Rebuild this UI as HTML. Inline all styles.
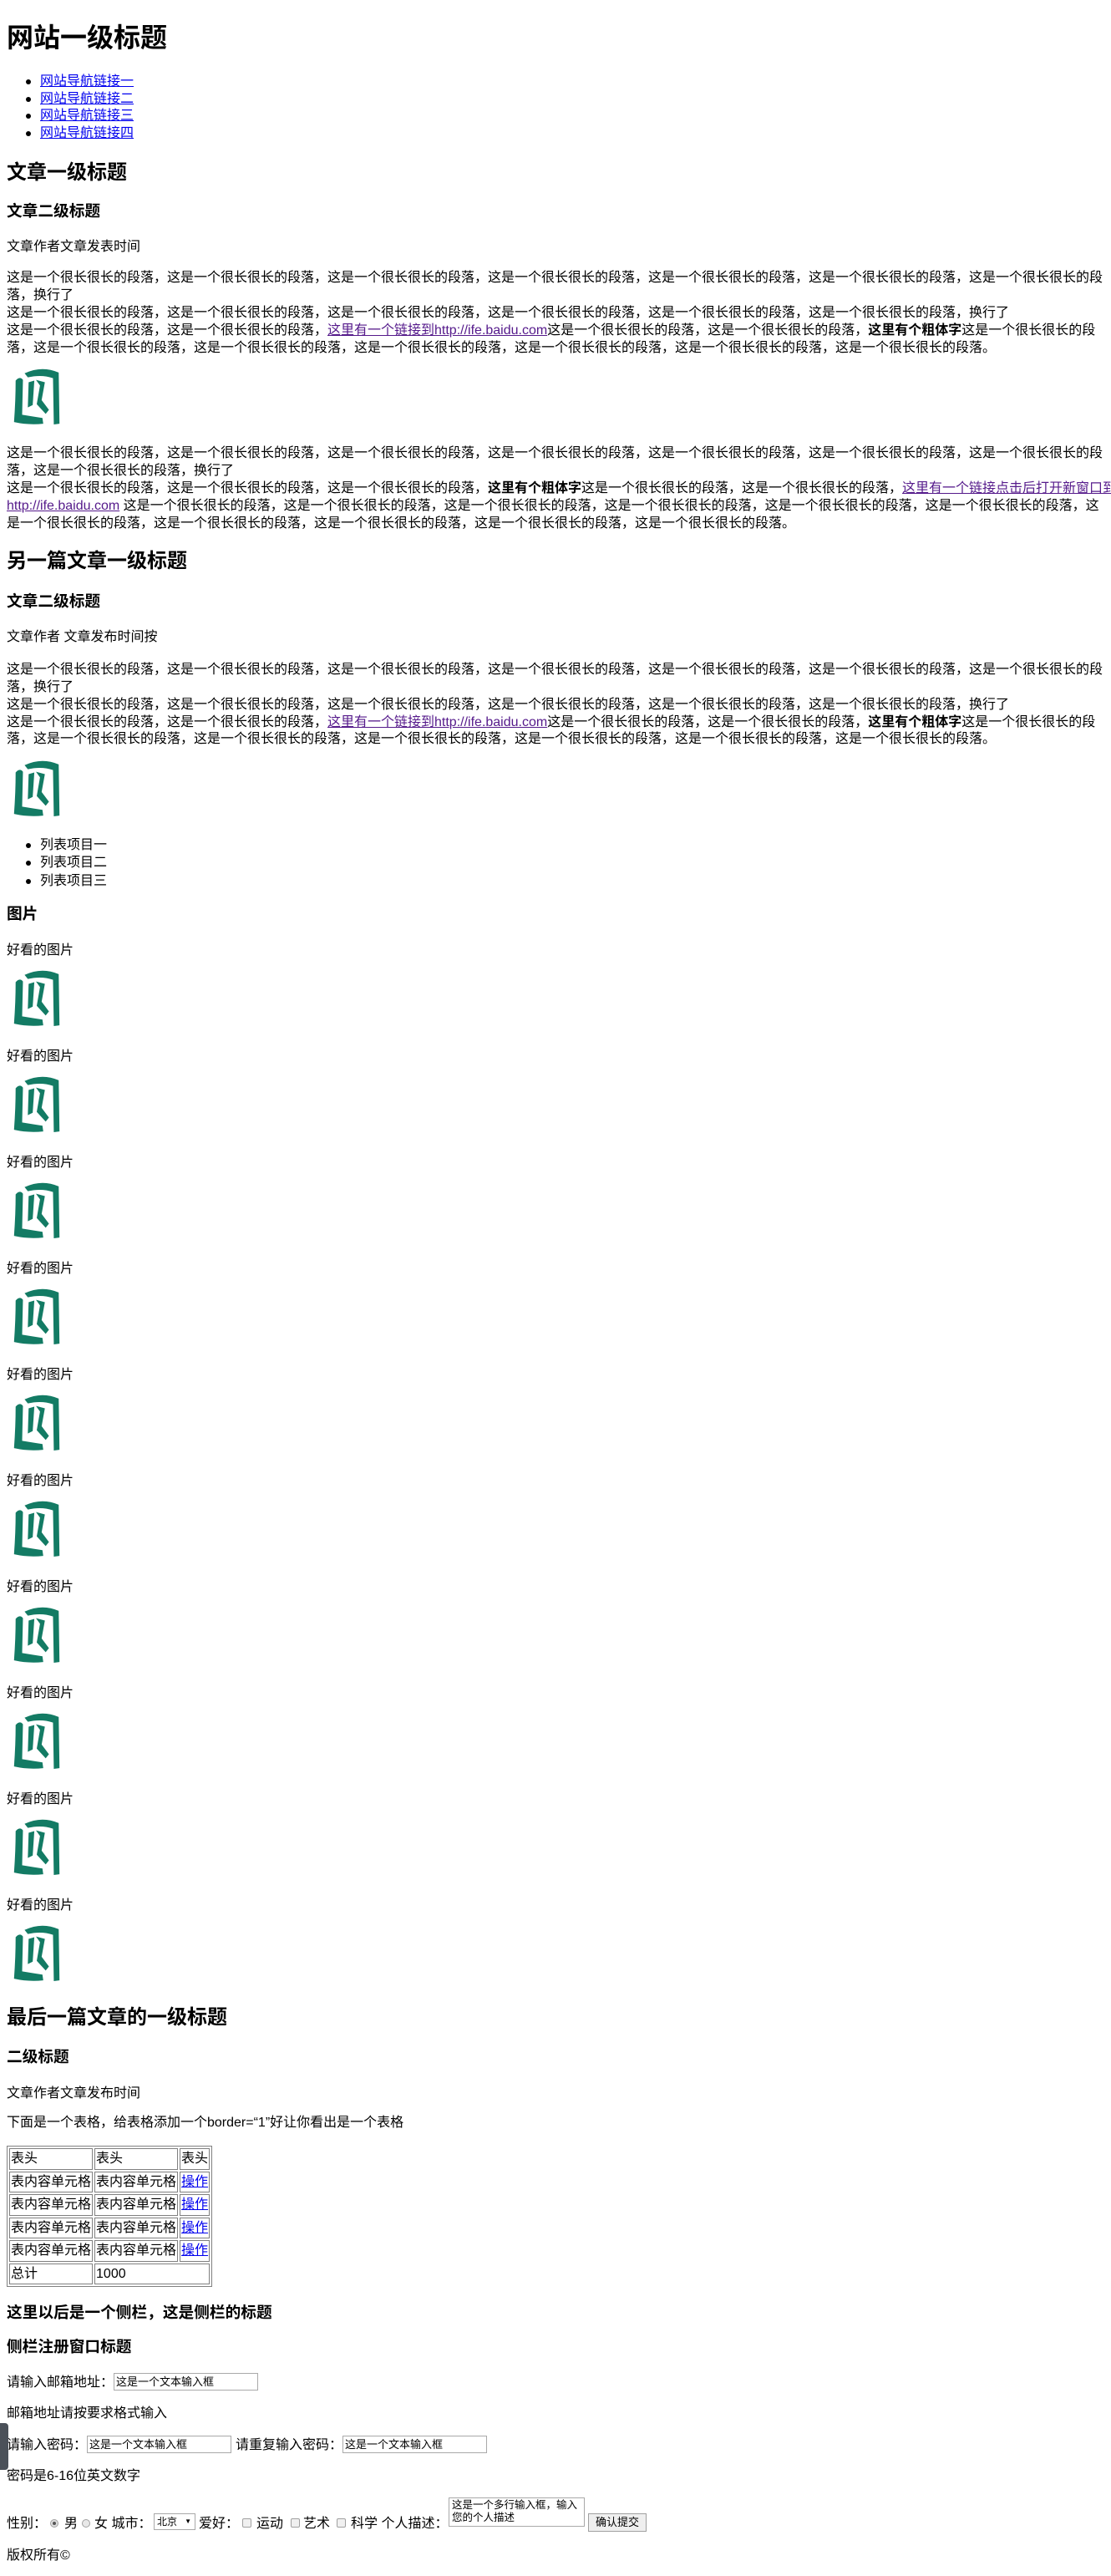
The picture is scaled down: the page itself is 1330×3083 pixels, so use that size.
<!DOCTYPE html>
<html><head><meta charset="utf-8">
<style>
html,body{margin:0;padding:0;background:#fff;}
body{width:1330px;height:3083px;position:relative;overflow:hidden;font-family:"Liberation Sans","Noto Sans CJK SC",sans-serif;color:#000;font-size:16px;}
.a{position:absolute;left:8px;white-space:nowrap;line-height:21px;height:21px;}
.h1{font-size:32px;font-weight:bold;line-height:42px;height:42px;}
.h2{font-size:24px;font-weight:bold;line-height:32px;height:32px;}
.h3{font-size:18.7px;font-weight:bold;line-height:26px;height:26px;}
a{color:#0000ee;}
a.v{color:#551a8b;}
.li{left:48px;}
.li:before{content:"";position:absolute;left:-17px;top:8px;width:6px;height:6px;border-radius:50%;background:#000;}
.img{position:absolute;left:14px;width:60px;height:70px;}
table{border-collapse:separate;border-spacing:2px;border:1px solid #808080;position:absolute;left:8px;top:2568px;font-size:16px;}
td{border:1px solid #808080;padding:1px;line-height:21.5px;white-space:nowrap;}
.inp{position:absolute;height:19px;border:1px solid #a9a9a9;font-size:13px;line-height:19px;padding-left:2px;box-sizing:border-box;height:21px;}
.rad{position:absolute;width:10px;height:10px;border-radius:50%;border:1px solid #a0a0a0;background:#e8e8e8;box-sizing:border-box;}
.chk{position:absolute;width:11px;height:11px;border:1px solid #a0a0a0;background:#f0f0f0;border-radius:2px;box-sizing:border-box;}
</style></head><body>
<svg width="0" height="0" style="position:absolute"><defs><g id="ic" fill="#137b64">
<path d="M4 16 Q9 10 13 15 L12 58 Q24 60 37 62 L38 69 Q20 71 2 67 Q4 40 4 16 Z"/>
<path d="M15 7 Q36 -3 57 6 L58 69 L51 70 L50 13 Q36 8 19 12 Z"/>
<path d="M20 18 L27 16 L25 46 L19 49 Z"/>
<path d="M29 15 L40 18 L36 40 L45 52 L41 57 L30 45 L34 22 Z"/>
</g></defs></svg>

<div class="a h1" style="top:24px">网站一级标题</div>
<div class="a li" style="top:87px"><a href="#">网站导航链接一</a></div>
<div class="a li" style="top:108px"><a href="#">网站导航链接二</a></div>
<div class="a li" style="top:128px"><a href="#">网站导航链接三</a></div>
<div class="a li" style="top:149px"><a href="#">网站导航链接四</a></div>

<div class="a h2" style="top:191px">文章一级标题</div>
<div class="a h3" style="top:240px">文章二级标题</div>
<div class="a" style="top:285px">文章作者文章发表时间</div>
<div class="a" style="top:322px">这是一个很长很长的段落，这是一个很长很长的段落，这是一个很长很长的段落，这是一个很长很长的段落，这是一个很长很长的段落，这是一个很长很长的段落，这是一个很长很长的段</div>
<div class="a" style="top:343px">落，换行了</div>
<div class="a" style="top:364px">这是一个很长很长的段落，这是一个很长很长的段落，这是一个很长很长的段落，这是一个很长很长的段落，这是一个很长很长的段落，这是一个很长很长的段落，换行了</div>
<div class="a" style="top:385px">这是一个很长很长的段落，这是一个很长很长的段落，<a class="v" href="#">这里有一个链接到http://ife.baidu.com</a>这是一个很长很长的段落，这是一个很长很长的段落，<b>这里有个粗体字</b>这是一个很长很长的段</div>
<div class="a" style="top:406px">落，这是一个很长很长的段落，这是一个很长很长的段落，这是一个很长很长的段落，这是一个很长很长的段落，这是一个很长很长的段落，这是一个很长很长的段落。</div>
<svg class="img" style="top:440px" viewBox="0 0 60 72"><use href="#ic"/></svg>
<div class="a" style="top:532px">这是一个很长很长的段落，这是一个很长很长的段落，这是一个很长很长的段落，这是一个很长很长的段落，这是一个很长很长的段落，这是一个很长很长的段落，这是一个很长很长的段</div>
<div class="a" style="top:553px">落，这是一个很长很长的段落，换行了</div>
<div class="a" style="top:574px">这是一个很长很长的段落，这是一个很长很长的段落，这是一个很长很长的段落，<b>这里有个粗体字</b>这是一个很长很长的段落，这是一个很长很长的段落，<a class="v" href="#">这里有一个链接点击后打开新窗口到</a></div>
<div class="a" style="top:595px"><a class="v" href="#">http://ife.baidu.com</a> 这是一个很长很长的段落，这是一个很长很长的段落，这是一个很长很长的段落，这是一个很长很长的段落，这是一个很长很长的段落，这是一个很长很长的段落，这</div>
<div class="a" style="top:616px">是一个很长很长的段落，这是一个很长很长的段落，这是一个很长很长的段落，这是一个很长很长的段落，这是一个很长很长的段落。</div>

<div class="a h2" style="top:656px">另一篇文章一级标题</div>
<div class="a h3" style="top:707px">文章二级标题</div>
<div class="a" style="top:752px">文章作者 文章发布时间按</div>
<div class="a" style="top:791px">这是一个很长很长的段落，这是一个很长很长的段落，这是一个很长很长的段落，这是一个很长很长的段落，这是一个很长很长的段落，这是一个很长很长的段落，这是一个很长很长的段</div>
<div class="a" style="top:812px">落，换行了</div>
<div class="a" style="top:833px">这是一个很长很长的段落，这是一个很长很长的段落，这是一个很长很长的段落，这是一个很长很长的段落，这是一个很长很长的段落，这是一个很长很长的段落，换行了</div>
<div class="a" style="top:854px">这是一个很长很长的段落，这是一个很长很长的段落，<a class="v" href="#">这里有一个链接到http://ife.baidu.com</a>这是一个很长很长的段落，这是一个很长很长的段落，<b>这里有个粗体字</b>这是一个很长很长的段</div>
<div class="a" style="top:874px">落，这是一个很长很长的段落，这是一个很长很长的段落，这是一个很长很长的段落，这是一个很长很长的段落，这是一个很长很长的段落，这是一个很长很长的段落。</div>
<svg class="img" style="top:909px" viewBox="0 0 60 72"><use href="#ic"/></svg>
<div class="a li" style="top:1001px">列表项目一</div>
<div class="a li" style="top:1022px">列表项目二</div>
<div class="a li" style="top:1044px">列表项目三</div>
<div class="a h3" style="top:1081px">图片</div>

<div class="a" style="top:1127px">好看的图片</div><svg class="img" style="top:1160px" viewBox="0 0 60 72"><use href="#ic"/></svg>
<div class="a" style="top:1254px">好看的图片</div><svg class="img" style="top:1287px" viewBox="0 0 60 72"><use href="#ic"/></svg>
<div class="a" style="top:1381px">好看的图片</div><svg class="img" style="top:1414px" viewBox="0 0 60 72"><use href="#ic"/></svg>
<div class="a" style="top:1508px">好看的图片</div><svg class="img" style="top:1541px" viewBox="0 0 60 72"><use href="#ic"/></svg>
<div class="a" style="top:1635px">好看的图片</div><svg class="img" style="top:1668px" viewBox="0 0 60 72"><use href="#ic"/></svg>
<div class="a" style="top:1762px">好看的图片</div><svg class="img" style="top:1795px" viewBox="0 0 60 72"><use href="#ic"/></svg>
<div class="a" style="top:1889px">好看的图片</div><svg class="img" style="top:1922px" viewBox="0 0 60 72"><use href="#ic"/></svg>
<div class="a" style="top:2016px">好看的图片</div><svg class="img" style="top:2049px" viewBox="0 0 60 72"><use href="#ic"/></svg>
<div class="a" style="top:2143px">好看的图片</div><svg class="img" style="top:2176px" viewBox="0 0 60 72"><use href="#ic"/></svg>
<div class="a" style="top:2270px">好看的图片</div><svg class="img" style="top:2303px" viewBox="0 0 60 72"><use href="#ic"/></svg>

<div class="a h2" style="top:2399px">最后一篇文章的一级标题</div>
<div class="a h3" style="top:2449px">二级标题</div>
<div class="a" style="top:2495px">文章作者文章发布时间</div>
<div class="a" style="top:2530px">下面是一个表格，给表格添加一个border=“1”好让你看出是一个表格</div>
<table>
<tr><td>表头</td><td>表头</td><td>表头</td></tr>
<tr><td>表内容单元格</td><td>表内容单元格</td><td><a href="#">操作</a></td></tr>
<tr><td>表内容单元格</td><td>表内容单元格</td><td><a href="#">操作</a></td></tr>
<tr><td>表内容单元格</td><td>表内容单元格</td><td><a href="#">操作</a></td></tr>
<tr><td>表内容单元格</td><td>表内容单元格</td><td><a href="#">操作</a></td></tr>
<tr><td>总计</td><td colspan="2">1000</td></tr>
</table>
<div class="a h3" style="top:2755px">这里以后是一个侧栏，这是侧栏的标题</div>
<div class="a h3" style="top:2796px">侧栏注册窗口标题</div>
<div class="a" style="top:2841px">请输入邮箱地址：</div>
<div class="inp" style="left:136px;top:2840px;width:173px">这是一个文本输入框</div>
<div class="a" style="top:2878px">邮箱地址请按要求格式输入</div>
<div class="a" style="top:2916px">请输入密码：</div>
<div class="inp" style="left:104px;top:2915px;width:173px">这是一个文本输入框</div>
<div class="a" style="top:2916px;left:282px">请重复输入密码：</div>
<div class="inp" style="left:410px;top:2915px;width:173px">这是一个文本输入框</div>
<div class="a" style="top:2953px">密码是6-16位英文数字</div>
<div style="position:absolute;left:0;top:2900px;width:10px;height:56px;background:#4b5159;border-radius:0 4px 4px 0;"></div>

<div class="a" style="top:3010px">性别：</div>
<div class="rad" style="left:60px;top:3015px;background:#ddd"><div style="width:4px;height:4px;border-radius:50%;background:#555;margin:2px"></div></div>
<div class="a" style="top:3010px;left:77px">男</div>
<div class="rad" style="left:98px;top:3015px"></div>
<div class="a" style="top:3010px;left:113px">女 城市：</div>
<div style="position:absolute;left:184px;top:3008px;width:50px;height:20px;border:1px solid #a9a9a9;box-sizing:border-box;font-size:12px;line-height:18px;padding-left:3px;">北京<span style="position:absolute;right:4px;top:0;font-size:8px">▼</span></div>
<div class="a" style="top:3010px;left:238px">爱好：</div>
<div class="chk" style="left:290px;top:3014px"></div>
<div class="a" style="top:3010px;left:307px">运动</div>
<div class="chk" style="left:348px;top:3014px"></div>
<div class="a" style="top:3010px;left:363px">艺术</div>
<div class="chk" style="left:403px;top:3014px"></div>
<div class="a" style="top:3010px;left:420px">科学 个人描述：</div>
<div style="position:absolute;left:537px;top:2989px;width:163px;height:35px;border:1px solid #a9a9a9;box-sizing:border-box;font-size:12.5px;line-height:15px;padding:1px 3px;white-space:normal;">这是一个多行输入框，输入您的个人描述</div>
<div style="position:absolute;left:704px;top:3008px;width:70px;height:22px;border:1px solid #a0a0a0;background:#efefef;box-sizing:border-box;font-size:13px;line-height:20px;text-align:center;">确认提交</div>
<div class="a" style="top:3048px">版权所有©</div>
</body></html>
